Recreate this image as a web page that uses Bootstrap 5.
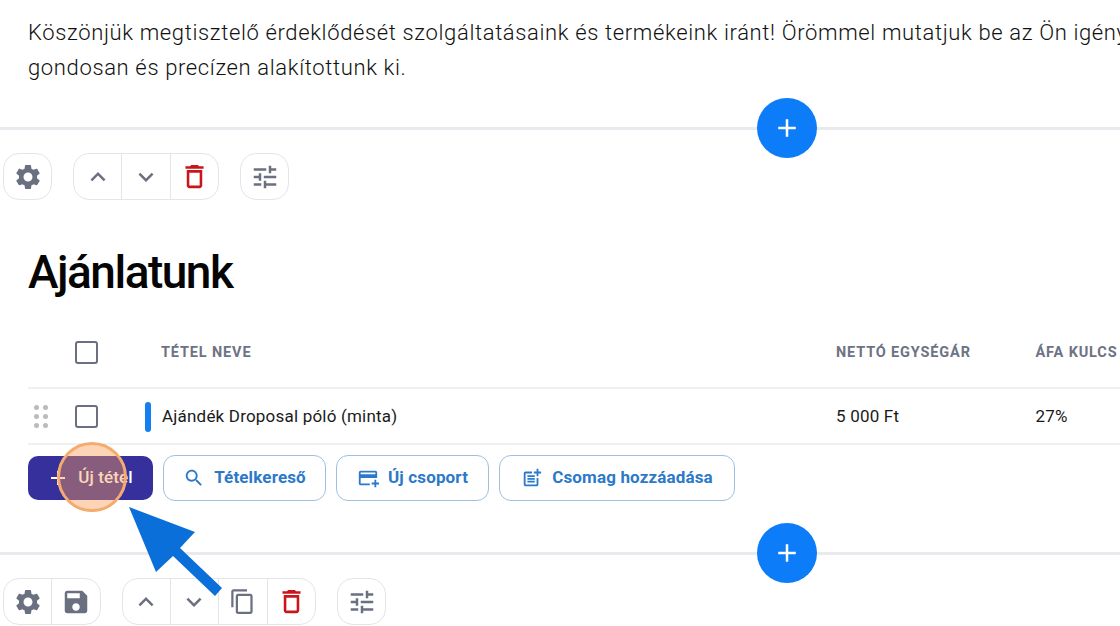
<!DOCTYPE html>
<html lang="hu">
<head>
    <meta charset="UTF-8" />
    <title>Ajánlat</title>
    <link href="https://cdn.jsdelivr.net/npm/bootstrap@5.3.0/dist/css/bootstrap.min.css" rel="stylesheet" />
    <script src="https://cdn.jsdelivr.net/npm/bootstrap@5.3.0/dist/js/bootstrap.bundle.min.js"></script>
    <style>
        html, body { overflow: hidden; height: 626px; }
        body { font-family: Roboto, "Liberation Sans", sans-serif; color: #111; background: #fff; }
        .page-wrap { width: 1574px; position: relative; }
        .intro-text { font-size: 22px; font-weight: 300; line-height: 35px; letter-spacing: .64px; padding: 15px 0 0 28px; height: 127px; margin: 0; color: #111; }
        .block-divider { height: 3px; background: #e9eaef; position: relative; }
        .add-circle { position: absolute; left: 757px; top: -29px; width: 60px; height: 60px; border-radius: 50%; border: 0; background: #0d7cf8; padding: 0; z-index: 2; }
        .add-circle svg { width: 30px; height: 30px; fill: #fff; }
        .tool-row { padding: 23px 0 0 3px; gap: 21px; }
        .tool-group { border: 1px solid #e4e5e9; border-radius: 16px; height: 47px; background: #fff; overflow: hidden; }
        .tool-cell { width: 47px; height: 45px; border: 0; background: transparent; padding: 0; display: flex; align-items: center; justify-content: center; }
        .tool-cell + .tool-cell { border-left: 1px solid #e4e5e9; width: 48.5px; }
        .tool-cell svg { width: 30px; height: 30px; fill: #6b7080; }
        .tool-cell svg.copy-icon { width: 27px; height: 27px; }
        .tool-cell svg.red-icon { fill: #c9161d; width: 31px; height: 31px; }
        .offer-title { font-size: 46px; font-weight: 500; letter-spacing: -1.5px; line-height: 54px; margin: 45px 0 0 28px; color: #050505; }
        .offer-table { margin: 31px 0 0 28px; width: 1546px; }
        .offer-row { display: flex; align-items: center; border-bottom: 2px solid #eef0f2; }
        .head-row { height: 59px; padding-bottom: 12px; font-size: 14.5px; font-weight: 700; letter-spacing: .85px; color: #6c7384; }
        .item-row { height: 56px; padding-top: 1px; font-size: 17px; letter-spacing: .2px; color: #1a1a1a; }
        .col-drag { width: 47px; flex: none; display: flex; padding-left: 6px; }
        .col-check { width: 87px; flex: none; }
        .col-name { width: 674px; flex: none; }
        .head-row .col-name { width: 675px; margin-left: -1px; }
        .col-price { width: 199.5px; flex: none; }
        .box-check { display: block; width: 23px; height: 23px; border: 2.5px solid #6b7080; border-radius: 3px; }
        .drag-dots { display: grid; grid-template-columns: 5px 5px; gap: 4px; }
        .drag-dots i { width: 5px; height: 5px; border-radius: 50%; background: #b9bbbd; display: block; }
        .color-tag { width: 6px; height: 30px; border-radius: 3px; background: #1480f0; margin-right: 11px; margin-left: -17px; flex: none; }
        .action-row { padding: 10px 0 0 28px; gap: 10px; }
        .act-btn { height: 46px; border: 1.5px solid #9dc0e2; border-radius: 12px; background: #fff; color: #2c79c9; font-size: 17px; font-weight: 700; letter-spacing: .15px; display: flex; align-items: center; padding: 0; justify-content: center; gap: 9px; }
        .act-btn svg { width: 22px; height: 22px; fill: #2c79c9; }
        .act-primary { background: #35309b; border: 0; color: #fff; width: 125px; height: 44px; margin-top: 1px; gap: 8px; padding-right: 2px; font-weight: 500; border-radius: 10px; }
        .act-primary svg { fill: #fff; width: 24px; height: 24px; }
        .focus-ring-spot { position: absolute; left: 57px; top: 442px; width: 70px; height: 70px; border-radius: 50%; background: rgba(250, 155, 80, .42); border: 3px solid #f5ab70; z-index: 3; }
        .guide-arrow { position: absolute; left: 0; top: 0; width: 300px; height: 626px; z-index: 4; fill: #0a6fd8; pointer-events: none; }
        .second-divider { margin-top: 51px; }
    </style>
</head>

<body>
    <svg width="0" height="0" class="d-block position-absolute">
        <symbol id="i-gear" viewBox="0 0 24 24"><path d="M19.14 12.94c.04-.3.06-.61.06-.94 0-.32-.02-.64-.07-.94l2.03-1.58c.18-.14.23-.41.12-.61l-1.92-3.32c-.12-.22-.37-.29-.59-.22l-2.39.96c-.5-.38-1.03-.7-1.62-.94l-.36-2.54c-.04-.24-.24-.41-.48-.41h-3.84c-.24 0-.43.17-.47.41l-.36 2.54c-.59.24-1.13.57-1.62.94l-2.39-.96c-.22-.08-.47 0-.59.22L2.74 8.87c-.12.21-.08.47.12.61l2.03 1.58c-.05.3-.09.63-.09.94s.02.64.07.94l-2.03 1.58c-.18.14-.23.41-.12.61l1.92 3.32c.12.22.37.29.59.22l2.39-.96c.5.38 1.03.7 1.62.94l.36 2.54c.05.24.24.41.48.41h3.84c.24 0 .44-.17.47-.41l.36-2.54c.59-.24 1.13-.56 1.62-.94l2.39.96c.22.08.47 0 .59-.22l1.92-3.32c.12-.22.07-.47-.12-.61l-2.01-1.58zM12 15.6c-1.98 0-3.6-1.62-3.6-3.6s1.62-3.6 3.6-3.6 3.6 1.62 3.6 3.6-1.62 3.6-3.6 3.6z"/></symbol>
        <symbol id="i-up" viewBox="0 0 24 24"><path d="M7.41 15.41L12 10.83l4.59 4.58L18 14l-6-6-6 6z"/></symbol>
        <symbol id="i-down" viewBox="0 0 24 24"><path d="M7.41 8.59L12 13.17l4.59-4.58L18 10l-6 6-6-6 1.41-1.41z"/></symbol>
        <symbol id="i-trash" viewBox="0 0 24 24"><path d="M6 19c0 1.1.9 2 2 2h8c1.1 0 2-.9 2-2V7H6v12zM8 9h8v10H8V9zm7.5-5l-1-1h-5l-1 1H5v2h14V4z"/></symbol>
        <symbol id="i-tune" viewBox="0 0 24 24"><path d="M3 17v2h6v-2H3zM3 5v2h10V5H3zm10 16v-2h8v-2h-8v-2h-2v6h2zM7 9v2H3v2h4v2h2V9H7zm14 4v-2H11v2h10zm-6-4h2V7h4V5h-4V3h-2v6z"/></symbol>
        <symbol id="i-save" viewBox="0 0 24 24"><path d="M17 3H5c-1.11 0-2 .9-2 2v14c0 1.1.89 2 2 2h14c1.1 0 2-.9 2-2V7l-4-4zm-5 16c-1.66 0-3-1.34-3-3s1.34-3 3-3 3 1.34 3 3-1.34 3-3 3zm3-10H5V5h10v4z"/></symbol>
        <symbol id="i-copy" viewBox="0 0 24 24"><path d="M16 1H4c-1.1 0-2 .9-2 2v14h2V3h12V1zm3 4H8c-1.1 0-2 .9-2 2v14c0 1.1.9 2 2 2h11c1.1 0 2-.9 2-2V7c0-1.1-.9-2-2-2zm0 16H8V7h11v14z"/></symbol>
        <symbol id="i-plus" viewBox="0 0 24 24"><path d="M19 13h-6v6h-2v-6H5v-2h6V5h2v6h6v2z"/></symbol>
        <symbol id="i-search" viewBox="0 0 24 24"><path d="M15.5 14h-.79l-.28-.27C15.41 12.59 16 11.11 16 9.5 16 5.91 13.09 3 9.5 3S3 5.91 3 9.5 5.91 16 9.5 16c1.61 0 3.09-.59 4.23-1.57l.27.28v.79l5 4.99L20.49 19l-4.99-5zm-6 0C7.01 14 5 11.99 5 9.5S7.01 5 9.5 5 14 7.01 14 9.5 11.99 14 9.5 14z"/></symbol>
        <symbol id="i-addcard" viewBox="0 0 24 24"><path d="M20 4H4c-1.11 0-1.99.89-1.99 2L2 18c0 1.11.89 2 2 2h10v-2H4v-6h18V6c0-1.11-.89-2-2-2zm0 4H4V6h16v2zm4 9v2h-3v3h-2v-3h-3v-2h3v-3h2v3h3z"/></symbol>
        <symbol id="i-postadd" viewBox="0 0 24 24"><path d="M17 19.22H5V7h7V5H5c-1.1 0-2 .9-2 2v12c0 1.1.9 2 2 2h12c1.1 0 2-.9 2-2v-7h-2v7.22zM19 2h-2v3h-3c.01.01 0 2 0 2h3v2.99c.01.01 2 0 2 0V7h3V5h-3V2zM7 9h8v2H7zM7 12v2h8v-2zM7 15h8v2H7z"/></symbol>
    </svg>

    <div class="page-wrap">
        <p class="intro-text">Köszönjük megtisztelő érdeklődését szolgáltatásaink és termékeink iránt! Örömmel mutatjuk be az Ön igényeire szabott ajánlatunkat, amelyet<br />gondosan és precízen alakítottunk ki.</p>

        <div class="block-divider">
            <button type="button" class="add-circle d-flex align-items-center justify-content-center"><svg><use href="#i-plus" /></svg></button>
        </div>

        <!-- Szakasz eszköztár -->
        <div class="d-flex tool-row">
            <div class="d-flex tool-group">
                <button type="button" class="tool-cell"><svg><use href="#i-gear" /></svg></button>
            </div>
            <div class="d-flex tool-group">
                <button type="button" class="tool-cell"><svg><use href="#i-up" /></svg></button>
                <button type="button" class="tool-cell"><svg><use href="#i-down" /></svg></button>
                <button type="button" class="tool-cell"><svg class="red-icon"><use href="#i-trash" /></svg></button>
            </div>
            <div class="d-flex tool-group">
                <button type="button" class="tool-cell"><svg><use href="#i-tune" /></svg></button>
            </div>
        </div>

        <h1 class="offer-title">Ajánlatunk</h1>

        <!-- Tételek -->
        <div class="offer-table">
            <div class="offer-row head-row">
                <div class="col-drag"></div>
                <div class="col-check"><span class="box-check"></span></div>
                <div class="col-name">TÉTEL NEVE</div>
                <div class="col-price">NETTÓ EGYSÉGÁR</div>
                <div>ÁFA KULCS</div>
            </div>
            <div class="offer-row item-row">
                <div class="col-drag"><span class="drag-dots"><i></i><i></i><i></i><i></i><i></i><i></i></span></div>
                <div class="col-check"><span class="box-check"></span></div>
                <span class="color-tag"></span>
                <div class="col-name">Ajándék Droposal póló (minta)</div>
                <div class="col-price">5 000 Ft</div>
                <div>27%</div>
            </div>
        </div>

        <div class="d-flex action-row">
            <button type="button" class="act-btn act-primary"><svg><use href="#i-plus" /></svg>Új tétel</button>
            <button type="button" class="act-btn" style="width: 163px"><svg><use href="#i-search" /></svg>Tételkereső</button>
            <button type="button" class="act-btn" style="width: 153px"><svg><use href="#i-addcard" /></svg>Új csoport</button>
            <button type="button" class="act-btn" style="width: 236px"><svg><use href="#i-postadd" /></svg>Csomag hozzáadása</button>
        </div>

        <div class="block-divider second-divider">
            <button type="button" class="add-circle d-flex align-items-center justify-content-center"><svg><use href="#i-plus" /></svg></button>
        </div>

        <div class="d-flex tool-row">
            <div class="d-flex tool-group">
                <button type="button" class="tool-cell"><svg><use href="#i-gear" /></svg></button>
                <button type="button" class="tool-cell"><svg><use href="#i-save" /></svg></button>
            </div>
            <div class="d-flex tool-group">
                <button type="button" class="tool-cell"><svg><use href="#i-up" /></svg></button>
                <button type="button" class="tool-cell"><svg><use href="#i-down" /></svg></button>
                <button type="button" class="tool-cell"><svg class="copy-icon"><use href="#i-copy" /></svg></button>
                <button type="button" class="tool-cell"><svg class="red-icon"><use href="#i-trash" /></svg></button>
            </div>
            <div class="d-flex tool-group">
                <button type="button" class="tool-cell"><svg><use href="#i-tune" /></svg></button>
            </div>
        </div>

        <!-- Kiemelés és nyíl a képernyőfotón -->
        <div class="focus-ring-spot"></div>
        <svg class="guide-arrow" viewBox="0 0 300 626"><polygon points="129,507 195,532 180,548 222,588 215,596 173,556 156,572" /></svg>
    </div>
</body>

</html>
